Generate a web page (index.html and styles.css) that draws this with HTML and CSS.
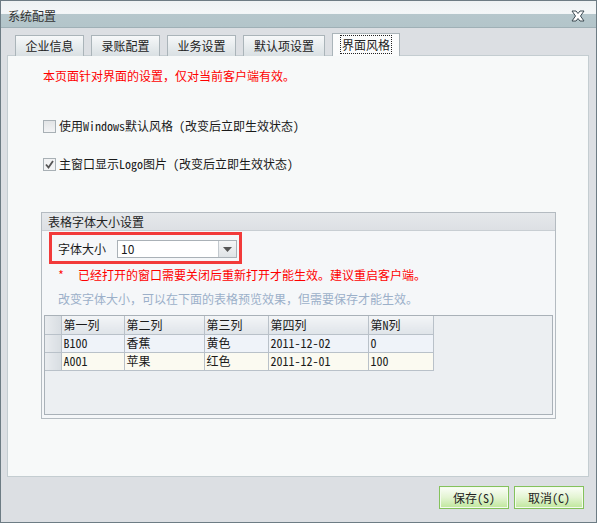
FILE: index.html
```html
<!DOCTYPE html>
<html lang="zh-CN">
<head>
    <meta charset="UTF-8">
    <title>系统配置</title>
    <link rel="stylesheet" href="styles.css">
</head>
<body>
<div class="window">
    <div class="titlebar">
        <span class="title">系统配置</span>
        <svg class="close" width="16" height="12" viewBox="0 0 16 12">
            <path d="M2 1 L6 1 L8 3.5 L10 1 L14 1 L10.5 6 L14 11 L10 11 L8 8.5 L6 11 L2 11 L5.5 6 Z" fill="#fff" stroke="#3c4a52" stroke-width="1"/>
        </svg>
    </div>

    <div class="tabs">
        <div class="tab">企业信息</div>
        <div class="tab">录账配置</div>
        <div class="tab">业务设置</div>
        <div class="tab tab-wide">默认项设置</div>
        <div class="tab active"><span class="focus">界面风格</span></div>
    </div>

    <div class="panel">
        <div class="notice">本页面针对界面的设置，仅对当前客户端有效。</div>

        <div class="check-row first">
            <span class="checkbox"></span>
            <span>使用Windows默认风格 (改变后立即生效状态)</span>
        </div>
        <div class="check-row">
            <span class="checkbox checked">
                <svg width="11" height="11" viewBox="0 0 11 11"><path d="M2 5.5 L4.5 8.5 L9 2" fill="none" stroke="#555" stroke-width="1.8"/></svg>
            </span>
            <span>主窗口显示Logo图片 (改变后立即生效状态)</span>
        </div>

        <div class="group">
            <div class="group-head">表格字体大小设置</div>
            <div class="group-body">
                <div class="highlight">
                    <span class="label">字体大小</span>
                    <div class="combo">
                        <span class="combo-value">10</span>
                        <span class="combo-btn"><svg width="9" height="5" viewBox="0 0 9 5"><path d="M0 0 L9 0 L4.5 5 Z" fill="#555"/></svg></span>
                    </div>
                </div>
                <div class="warn"><span class="star">*</span>已经打开的窗口需要关闭后重新打开才能生效。建议重启客户端。</div>
                <div class="hint">改变字体大小，可以在下面的表格预览效果，但需要保存才能生效。</div>

                <div class="grid">
                    <table>
                        <tr>
                            <th class="ind"></th>
                            <th class="c1">第一列</th>
                            <th class="c2">第二列</th>
                            <th class="c3">第三列</th>
                            <th class="c4">第四列</th>
                            <th class="c5">第N列</th>
                        </tr>
                        <tr class="row-a">
                            <td class="ind"></td>
                            <td>B100</td>
                            <td>香蕉</td>
                            <td>黄色</td>
                            <td>2011-12-02</td>
                            <td>0</td>
                        </tr>
                        <tr class="row-b">
                            <td class="ind"></td>
                            <td>A001</td>
                            <td>苹果</td>
                            <td>红色</td>
                            <td>2011-12-01</td>
                            <td>100</td>
                        </tr>
                    </table>
                </div>
            </div>
        </div>
    </div>

    <div class="footer">
        <button class="btn">保存(S)</button>
        <button class="btn">取消(C)</button>
    </div>
</div>
</body>
</html>
```

FILE: styles.css
```css
* {
    box-sizing: border-box;
}

body {
    margin: 0;
    font-family: "Noto Sans Mono CJK SC", "Noto Sans CJK SC", sans-serif;
    font-size: 12px;
    color: #1a1a1a;
}

.window {
    width: 597px;
    height: 523px;
    border: 1px solid #6d7c84;
    background: #dcdfe3;
}

.titlebar {
    height: 27px;
    display: flex;
    align-items: center;
    justify-content: space-between;
    padding: 3px 10px 0 7px;
    background: linear-gradient(#eef2f3 0, #f4f7f8 48%, #b6c7cc 50%, #b3c5ca 100%);
    border-bottom: 1px solid #9fb0b6;
}

.title {
    font-family: "Noto Sans CJK SC", sans-serif;
    color: #333;
    font-size: 12px;
}

.close {
    margin-top: 1px;
}

.tabs {
    display: flex;
    align-items: flex-end;
    gap: 7px;
    height: 28px;
    padding-left: 14px;
    margin-bottom: -1px;
}

.tab {
    width: 69px;
    height: 21px;
    border: 1px solid #aab4b9;
    border-bottom: none;
    background: linear-gradient(#f6f8f9, #d9e0e3);
    font-family: "Noto Sans CJK SC", sans-serif;
    color: #222;
    text-align: center;
    line-height: 20px;
}

.tab-wide {
    width: 82px;
}

.tab.active {
    width: 68px;
    height: 23px;
    background: #fafbfb;
    line-height: 22px;
    position: relative;
    z-index: 1;
}

.focus {
    outline: 1px dotted #222;
    outline-offset: 0;
    padding: 0 1px;
}

.panel {
    margin: 0 7px 0 6px;
    height: 422px;
    border: 1px solid #c4cdd1;
    background: #f7f9f9;
    padding: 12px 0 0 35px;
}

.notice {
    color: #ff0000;
    line-height: 16px;
}

.check-row {
    display: flex;
    align-items: center;
    line-height: 16px;
    margin-top: 22px;
}

.check-row.first {
    margin-top: 34px;
}

.checkbox {
    width: 13px;
    height: 13px;
    border: 1px solid #a8b0b5;
    background: linear-gradient(#e2e4e6, #f3f4f5);
    margin-right: 3px;
    display: flex;
    align-items: center;
    justify-content: center;
}

.checkbox.checked {
    background: #f2f3f4;
}

.group {
    margin: 40px 0 0 -2px;
    width: 515px;
    height: 207px;
    border: 1px solid #b4bbc1;
    background: #f5f7f9;
}

.group-head {
    height: 18px;
    line-height: 17px;
    padding-left: 6px;
    background: linear-gradient(#e5e8eb, #dde0e4);
    border-bottom: 1px solid #c8ced3;
    font-family: "Noto Sans CJK SC", sans-serif;
    color: #222;
}

.group-body {
    padding: 1px 2px 0 2px;
}

.highlight {
    margin-left: 5px;
    width: 193px;
    height: 32px;
    border: 3px solid #f23a3a;
    display: flex;
    align-items: center;
    padding-left: 6px;
}

.label {
    font-family: "Noto Sans CJK SC", sans-serif;
    width: 59px;
}

.combo {
    width: 120px;
    height: 18px;
    border: 1px solid #aab1b7;
    background: #fff;
    display: flex;
    margin-top: 2px;
}

.combo-value {
    flex: 1;
    padding-left: 3px;
    line-height: 16px;
    font-family: "Noto Sans CJK SC", sans-serif;
}

.combo-btn {
    width: 18px;
    border-left: 1px solid #c3c9ce;
    background: linear-gradient(#f5f6f7, #dfe3e6);
    display: flex;
    align-items: center;
    justify-content: center;
}

.warn {
    color: #ff0000;
    line-height: 16px;
    margin: 3px 0 0 14px;
}

.star {
    display: inline-block;
    width: 20px;
}

.hint {
    color: #9cb0c9;
    line-height: 16px;
    margin: 8px 0 0 14px;
}

.grid {
    margin-top: 8px;
    width: 509px;
    height: 100px;
    border: 1px solid #a9b1b8;
    background: #eceff2;
}

table {
    border-collapse: collapse;
}

th, td {
    height: 18px;
    padding: 0 0 0 2px;
    border: 1px solid #b9c1c9;
    text-align: left;
    font-weight: normal;
    line-height: 16px;
    white-space: nowrap;
}

tr:first-child th {
    border-top: none;
}

th {
    background: linear-gradient(#f3f5f7, #dfe4e9);
}

.ind {
    width: 16px;
    border-left: none;
    background: linear-gradient(to right, #e9ecef, #d8dde2);
}

.c1 { width: 63px; }
.c2 { width: 80px; }
.c3 { width: 64px; }
.c4 { width: 100px; }
.c5 { width: 65px; }

.row-a td {
    background: #eff3f9;
}

.row-b td {
    background: #fbfaf1;
}

.row-a td.ind, .row-b td.ind {
    background: linear-gradient(to right, #e9ecef, #d8dde2);
}

.footer {
    display: flex;
    justify-content: flex-end;
    gap: 5px;
    padding: 9px 12px 0 0;
}

.btn {
    width: 70px;
    height: 23px;
    border: 1px solid #84c25c;
    background: linear-gradient(#fbfef8, #e3f4d2 50%, #bfe79b);
    box-shadow: inset 0 0 0 1px #f4fbee;
    font-family: "Noto Sans Mono CJK SC", "Noto Sans CJK SC", sans-serif;
    font-size: 12px;
    color: #222;
    padding: 0;
}
```
